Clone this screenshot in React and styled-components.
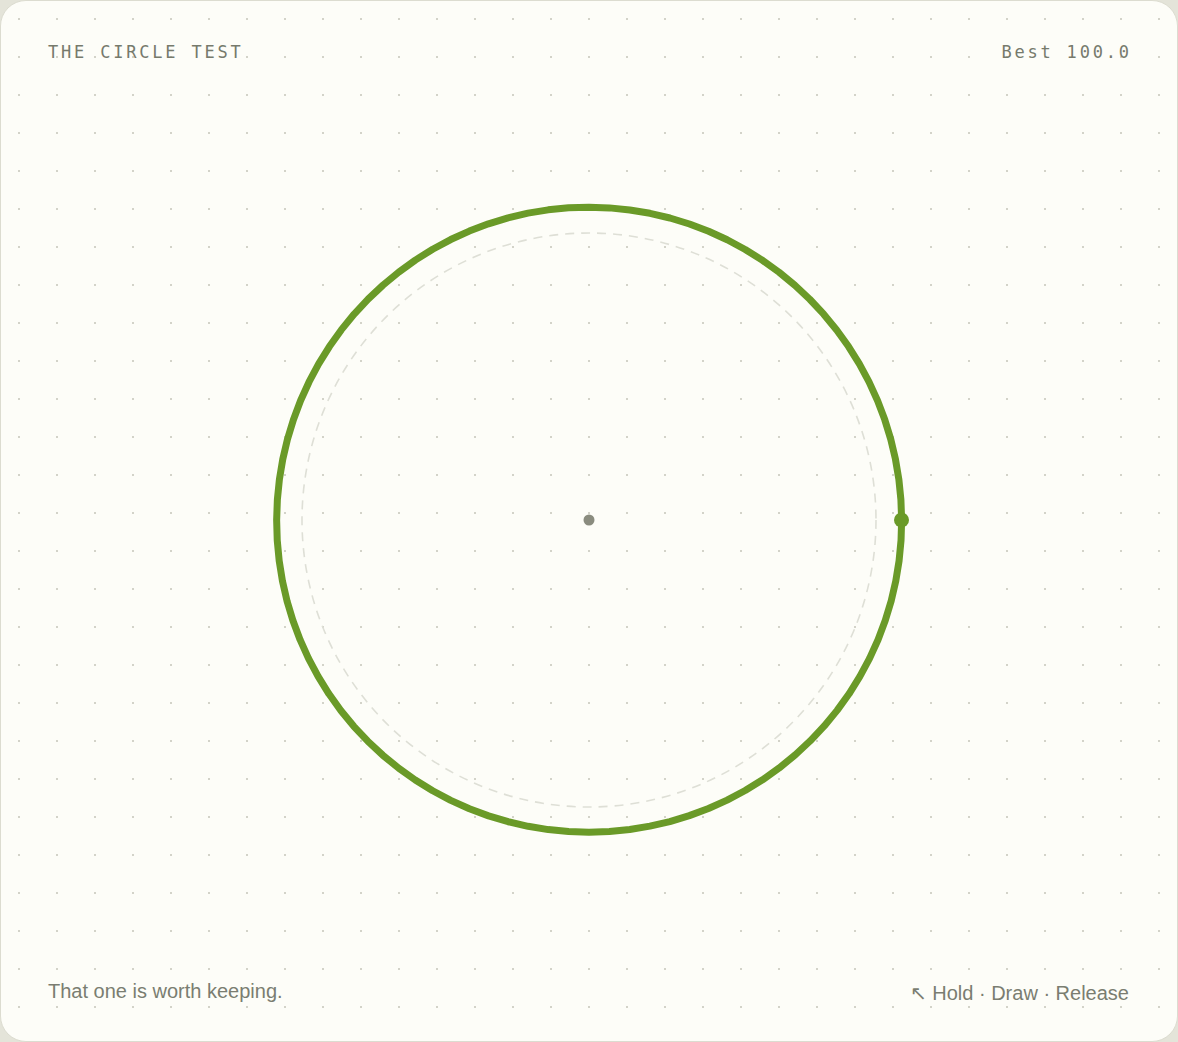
import React from "react";
import styled, { createGlobalStyle } from "styled-components";

const Global = createGlobalStyle`
  html, body { margin: 0; padding: 0; background: #e4e4d9; }
  body { width: 1178px; height: 1042px; overflow: hidden; }
`;

const Card = styled.div`
  position: relative;
  box-sizing: border-box;
  width: 1178px;
  height: 1042px;
  border: 1px solid #dcdcd0;
  border-radius: 26px;
  background-color: #fdfdf8;
  background-image: radial-gradient(circle, #d3d3c9 0.9px, transparent 1.5px);
  background-size: 38px 38px;
  background-position: -1px -1px;
  display: flex;
  flex-direction: column;
  justify-content: space-between;
  padding: 41px 48px 38px 47px;
  overflow: hidden;
`;

const Stage = styled.svg`
  position: absolute;
  left: -1px;
  top: -1px;
  width: 1178px;
  height: 1042px;
  pointer-events: none;
`;

const Bar = styled.div`
  position: relative;
  display: flex;
  justify-content: space-between;
  align-items: ${(p) => (p.$bottom ? "flex-end" : "center")};
`;

const Mono = styled.span`
  font-family: "DejaVu Sans Mono", "Liberation Mono", monospace;
  font-size: 17px;
  line-height: 20px;
  letter-spacing: 2.8px;
  color: #767a6c;
  margin-right: ${(p) => (p.$right ? "-2.8px" : "0")};
`;

const Note = styled.span`
  font-family: "Liberation Sans", Arial, sans-serif;
  font-size: 20px;
  line-height: 24px;
  color: #7a7d71;
  position: relative;
  top: ${(p) => (p.$low ? "2px" : "0")};
`;

function polyCircle(cx, cy, r, n) {
  const pts = [];
  for (let i = 0; i <= n; i++) {
    const t = (i / n) * Math.PI * 2;
    const rr = r + 0.35 * Math.sin(t * 3 + 0.4);
    pts.push(`${(cx + rr * Math.cos(t)).toFixed(2)},${(cy + rr * Math.sin(t)).toFixed(2)}`);
  }
  return pts.join(" ");
}

export default function App() {
  const cx = 589;
  const cy = 520;
  return (
    <>
      <Global />
      <Card>
        <Stage viewBox="0 0 1178 1042">
          <circle
            cx={cx}
            cy={cy}
            r={287}
            fill="none"
            stroke="#dedfd6"
            strokeWidth="1.6"
            strokeDasharray="9 7"
          />
          <polyline
            points={polyCircle(cx, cy, 312.5, 96)}
            fill="none"
            stroke="#6a9a28"
            strokeWidth="7"
            strokeLinejoin="round"
            strokeLinecap="round"
          />
          <circle cx={cx} cy={cy} r={5.5} fill="#8a8c7f" />
          <circle cx={901.5} cy={cy} r={7.5} fill="#6a9a28" />
        </Stage>
        <Bar>
          <Mono>THE CIRCLE TEST</Mono>
          <Mono $right>Best 100.0</Mono>
        </Bar>
        <Bar $bottom>
          <Note>That one is worth keeping.</Note>
          <Note $low>↖ Hold · Draw · Release</Note>
        </Bar>
      </Card>
    </>
  );
}
